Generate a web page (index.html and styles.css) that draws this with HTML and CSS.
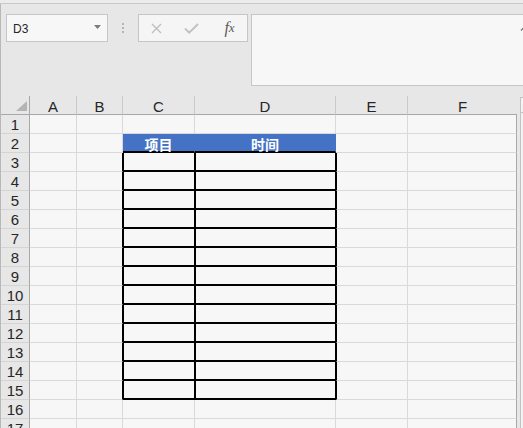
FILE: index.html
```html
<!DOCTYPE html>
<html>
<head>
<meta charset="utf-8">
<link rel="stylesheet" href="styles.css">
</head>
<body>
<div class="topstrip"></div>
<div class="main">
  <div class="toolbar">
    <div class="namebox">
      <span class="nb-text">D3</span>
      <svg class="nb-arrow" width="7" height="4" viewBox="0 0 7 4"><path d="M0 0H7L3.5 4Z" fill="#7a7a7a"/></svg>
    </div>
    <div class="dots"><i></i><i></i><i></i></div>
    <div class="fbtns">
      <span class="fbtn"><svg width="11" height="11" viewBox="0 0 11 11"><path d="M1 1L10 10M10 1L1 10" stroke="#bdbdbd" stroke-width="1.3" fill="none"/></svg></span>
      <span class="fbtn"><svg width="15" height="11" viewBox="0 0 15 11"><path d="M1 5.5L5.2 9.6L14 1" stroke="#c2c2c2" stroke-width="2" fill="none"/></svg></span>
      <span class="fbtn fx"><span class="fx-f">f</span><span class="fx-x">x</span></span>
    </div>
    <div class="formula">
      <svg class="caret" width="8" height="5" viewBox="0 0 8 5"><path d="M1 4.5L4 1.5L7 4.5" stroke="#777" stroke-width="1.4" fill="none"/></svg>
    </div>
  </div>
  <div class="sheet">
    <div class="grid">
      <div class="corner"><svg width="11" height="10" viewBox="0 0 11 10"><path d="M11 0V10H0Z" fill="#b4b4b4"/></svg></div>
      <div class="ch">A</div><div class="ch">B</div><div class="ch">C</div><div class="ch">D</div><div class="ch">E</div><div class="ch last">F</div>

      <div class="rh">1</div><div class="c"></div><div class="c"></div><div class="c"></div><div class="c"></div><div class="c"></div><div class="c f"></div>
      <div class="rh">2</div><div class="c"></div><div class="c"></div><div class="c hd">项目</div><div class="c hd">时间</div><div class="c"></div><div class="c f"></div>
      <div class="rh">3</div><div class="c"></div><div class="c bk"></div><div class="c tb tc"></div><div class="c tb td"></div><div class="c el"></div><div class="c f"></div>
      <div class="rh">4</div><div class="c"></div><div class="c bk"></div><div class="c tb tc"></div><div class="c tb td"></div><div class="c el"></div><div class="c f"></div>
      <div class="rh">5</div><div class="c"></div><div class="c bk"></div><div class="c tb tc"></div><div class="c tb td"></div><div class="c el"></div><div class="c f"></div>
      <div class="rh">6</div><div class="c"></div><div class="c bk"></div><div class="c tb tc"></div><div class="c tb td"></div><div class="c el"></div><div class="c f"></div>
      <div class="rh">7</div><div class="c"></div><div class="c bk"></div><div class="c tb tc"></div><div class="c tb td"></div><div class="c el"></div><div class="c f"></div>
      <div class="rh">8</div><div class="c"></div><div class="c bk"></div><div class="c tb tc"></div><div class="c tb td"></div><div class="c el"></div><div class="c f"></div>
      <div class="rh">9</div><div class="c"></div><div class="c bk"></div><div class="c tb tc"></div><div class="c tb td"></div><div class="c el"></div><div class="c f"></div>
      <div class="rh">10</div><div class="c"></div><div class="c bk"></div><div class="c tb tc"></div><div class="c tb td"></div><div class="c el"></div><div class="c f"></div>
      <div class="rh">11</div><div class="c"></div><div class="c bk"></div><div class="c tb tc"></div><div class="c tb td"></div><div class="c el"></div><div class="c f"></div>
      <div class="rh">12</div><div class="c"></div><div class="c bk"></div><div class="c tb tc"></div><div class="c tb td"></div><div class="c el"></div><div class="c f"></div>
      <div class="rh">13</div><div class="c"></div><div class="c bk"></div><div class="c tb tc"></div><div class="c tb td"></div><div class="c el"></div><div class="c f"></div>
      <div class="rh">14</div><div class="c"></div><div class="c bk"></div><div class="c tb tc"></div><div class="c tb td"></div><div class="c el"></div><div class="c f"></div>
      <div class="rh">15</div><div class="c"></div><div class="c bk"></div><div class="c tb tc"></div><div class="c tb td"></div><div class="c el"></div><div class="c f"></div>
      <div class="rh">16</div><div class="c"></div><div class="c"></div><div class="c"></div><div class="c"></div><div class="c"></div><div class="c f"></div>
      <div class="rh">17</div><div class="c"></div><div class="c"></div><div class="c"></div><div class="c"></div><div class="c"></div><div class="c f"></div>
    </div>
    <div class="vscroll"><div class="vs-btn"></div></div>
  </div>
</div>
</body>
</html>
```
FILE: styles.css
```css
html, body {
  margin: 0;
  padding: 0;
  width: 523px;
  height: 428px;
  overflow: hidden;
  background: #e7e7e7;
  font-family: "Liberation Sans", Arial, sans-serif;
}
.topstrip {
  height: 3px;
  background: #ececec;
  border-bottom: 1px solid #c8c8c8;
}
.main {
  border-left: 1px solid #b8b8b8;
  background: #e7e7e7;
}
.toolbar {
  height: 92px;
  box-sizing: border-box;
  padding: 10px 0 0 5px;
  display: flex;
  align-items: flex-start;
}
.namebox {
  flex: none;
  width: 102px;
  height: 28px;
  box-sizing: border-box;
  border: 1px solid #c6c6c6;
  background: #f7f7f7;
  display: flex;
  align-items: center;
  padding: 0 6px 0 6px;
}
.nb-text {
  flex: 1;
  font-size: 12px;
  color: #262626;
  padding-top: 1px;
}
.nb-arrow {
  margin-top: -2px;
}
.dots {
  flex: none;
  width: 2px;
  margin: 9px 14px 0 14px;
  display: flex;
  flex-direction: column;
  gap: 2px;
}
.dots i {
  display: block;
  width: 2px;
  height: 2px;
  background: #b4b4b4;
}
.fbtns {
  flex: none;
  width: 110px;
  height: 28px;
  box-sizing: border-box;
  border: 1px solid #c6c6c6;
  background: #f5f5f5;
  display: flex;
  align-items: center;
}
.fbtn {
  width: 37px;
  display: flex;
  justify-content: center;
  align-items: center;
}
.fx {
  font-family: "Liberation Serif", "Times New Roman", serif;
  font-style: italic;
  color: #5a5a5a;
  font-size: 16px;
  line-height: 1;
  padding-left: 3px;
  margin-top: -1px;
}
.fx-x {
  font-size: 13px;
}
.formula {
  flex: none;
  margin-left: 3px;
  width: 300px;
  height: 72px;
  box-sizing: border-box;
  border: 1px solid #c6c6c6;
  background: #f7f7f7;
  display: flex;
  align-items: flex-start;
  padding-top: 11px;
}
.caret {
  margin-left: 268px;
}
.sheet {
  display: flex;
  align-items: flex-start;
}
.grid {
  flex: none;
  display: grid;
  grid-template-columns: 29px 47px 46px 72px 141px 72px 109px;
  grid-auto-rows: 19px;
}
.grid > div {
  box-sizing: border-box;
}
.corner {
  background: #e7e7e7;
  border-right: 1px solid #a8a8a8;
  border-bottom: 1px solid #a8a8a8;
  display: flex;
  justify-content: flex-end;
  align-items: flex-end;
  padding: 0 2px 3px 0;
}
.ch {
  background: #e7e7e7;
  border-right: 1px solid #c9c9c9;
  border-bottom: 1px solid #a8a8a8;
  font-size: 15px;
  color: #262626;
  display: flex;
  justify-content: center;
  align-items: center;
  padding-top: 2px;
}
.ch.last {
  border-right: none;
}
.rh {
  background: #e7e7e7;
  border-right: 1px solid #a8a8a8;
  border-bottom: 1px solid #d4d4d4;
  font-size: 15px;
  color: #262626;
  display: flex;
  justify-content: center;
  align-items: center;
  padding-top: 1px;
}
.c {
  background: #f7f7f7;
  border-right: 1px solid #d9d9d9;
  border-bottom: 1px solid #d9d9d9;
}
.c.f {
  border-right-color: #a8a8a8;
}
.c.bk {
  border-right-color: #000;
}
.c.hd {
  background: #4472c4;
  border-right-color: #4472c4;
  border-bottom: 2px solid #000;
  color: #fff;
  font-weight: bold;
  font-size: 14px;
  font-family: "Noto Sans CJK SC", "Liberation Sans", sans-serif;
  display: flex;
  justify-content: center;
  align-items: center;
  padding-top: 2px;
}
.c.tb {
  border-right: 1px solid #000;
  border-bottom: 2px solid #000;
}
.c.tc {
  border-left: 1px solid #000;
}
.c.td {
  border-left: 1px solid #000;
}
.c.el {
  border-left: 1px solid #000;
}
.vscroll {
  flex: none;
  margin: 1px 0 0 3px;
  width: 20px;
  height: 340px;
  box-sizing: border-box;
  border: 1px solid #c3c3c3;
  background: #f3f3f3;
}
.vs-btn {
  height: 14px;
  border-bottom: 1px solid #c3c3c3;
}
```
